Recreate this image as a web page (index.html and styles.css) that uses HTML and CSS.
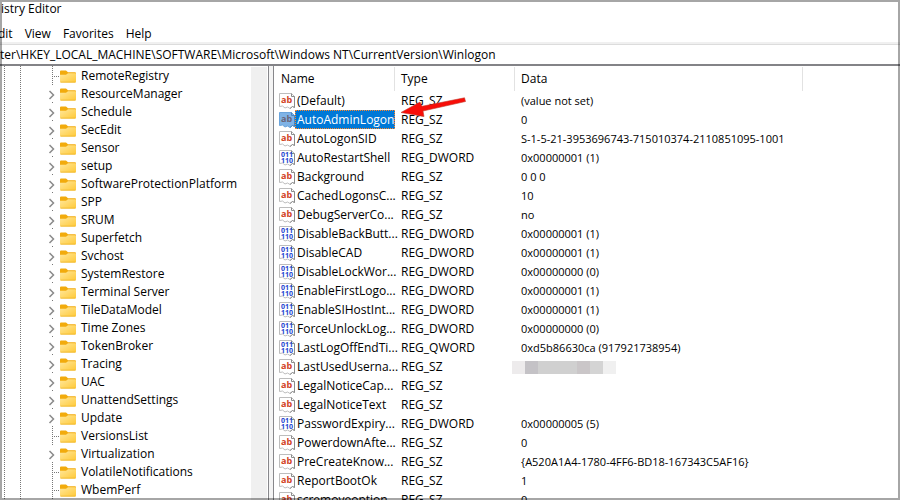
FILE: index.html
```
<!DOCTYPE html>
<html lang="en">
<head>
<meta charset="utf-8">
<title>Registry Editor</title>
<link rel="stylesheet" href="styles.css">
</head>
<body>
<svg class="defs" aria-hidden="true">
  <defs>
    <linearGradient id="fold" x1="0" y1="0" x2="1" y2="1">
      <stop offset="0" stop-color="#ffe79b"/>
      <stop offset="1" stop-color="#ffc937"/>
    </linearGradient>
    <symbol id="i-folder" viewBox="0 0 16 14" preserveAspectRatio="none">
      <path d="M0 1.5Q0 .5 1 .5H6L8 2.500H15Q16 2.500 16 3.500V6H0Z" fill="#f2ab0c"/>
      <path d="M0 5H6L8 3.500H15.500Q16 3.500 16 4V12.500Q16 13.500 15 13.500H1Q0 13.500 0 12.500Z" fill="url(#fold)"/>
      <path d="M.5 13.100H15.500" stroke="#eeb225" stroke-width=".8"/>
    </symbol>
    <symbol id="i-page" viewBox="0 0 16 16">
      <path class="page" d="M.5 .5H12.500L15.500 3.500V14.500L13.500 13.500L11 15.500L8.500 14L6 15L3.500 13L.5 13.500Z"/>
      <path class="fold" d="M12.500 .5V3.500H15.500V14.500L13.500 13.500L11 15.500"/>
    </symbol>
    <symbol id="i-sz" viewBox="0 0 16 16">
      <use href="#i-page"/>
      <text x="2" y="10" class="glyph-sz">ab</text>
    </symbol>
    <symbol id="i-bin" viewBox="0 0 16 16">
      <use href="#i-page"/>
      <text x="2" y="7" class="glyph-bin">011</text>
      <text x="2" y="13" class="glyph-bin">110</text>
    </symbol>
  </defs>
</svg>
<div class="window">
  <header class="title">istry Editor</header>
  <nav class="menu">
    <button>dit</button><button>View</button><button>Favorites</button><button>Help</button>
  </nav>
  <input class="address" aria-label="Address" value="ter\HKEY_LOCAL_MACHINE\SOFTWARE\Microsoft\Windows NT\CurrentVersion\Winlogon">
  <main class="panes">
    <div class="tree-pane">
      <ul class="tree" id="tree"></ul>
      <div class="scrollbar"></div>
    </div>
    <div class="splitter"></div>
    <div class="list-pane">
      <table class="values">
        <colgroup><col class="c-name"><col class="c-type"><col class="c-data"><col></colgroup>
        <thead><tr><th>Name</th><th>Type</th><th>Data</th><td></td></tr></thead>
        <tbody id="values"></tbody>
      </table>
      <svg class="arrow" viewBox="0 0 68 24" aria-hidden="true">
        <path d="M1 15.500L20 5L22 9.300L64.500 .8L65.500 4.500L23 14L24 19.500Z" fill="#f80d08" stroke="#c33a2c" stroke-width=".6"/>
      </svg>
    </div>
  </main>
</div>
<script src="app.js"></script>
</body>
</html>
```
FILE: styles.css
```
* { box-sizing: border-box; }
body {
  margin: 0;
  background: #fff;
  color: #000;
  font: 12px/18px "Open Sans", "Noto Sans", sans-serif;
}
.defs { position: absolute; width: 0; height: 0; }
.window {
  display: flex;
  flex-direction: column;
  height: 100vh;
  overflow: hidden;
}
.window::after {
  content: "";
  position: fixed;
  inset: 0;
  border: 2px solid rgba(0, 0, 0, 0.35);
  pointer-events: none;
}
.title { padding: 0 1px; }
.menu {
  display: flex;
  gap: 12px;
  align-items: center;
  height: 24px;
  padding-top: 7px;
  margin-left: -2px;
}
.menu button {
  margin: 0;
  padding: 0;
  border: 0;
  background: none;
  color: inherit;
  font: inherit;
}
.address {
  display: block;
  width: 100%;
  height: 24px;
  flex: none;
  padding: 2px 0 0;
  border: 0;
  border-bottom: 2px solid #838387;
  background: linear-gradient(#f0f0f0 2px, #dcdcdc 2px, #dcdcdc 3px, #fff 3px);
  color: inherit;
  font: inherit;
  outline: 0;
}
.panes { display: flex; flex: 1; min-height: 0; }
.tree-pane { display: flex; flex: none; width: 268px; overflow: hidden; }
.scrollbar { width: 16px; margin: 1px 1px 0 0; background: #f0f0f0; }
.tree {
  flex: 1;
  margin: 0;
  padding: 1px 0 0;
  list-style: none;
  background:
    repeating-linear-gradient(#777 0 1px, transparent 1px 2px) 4px 0 / 1px 100% no-repeat,
    repeating-linear-gradient(#777 0 1px, transparent 1px 2px) 20px 0 / 1px 100% no-repeat,
    repeating-linear-gradient(#777 0 1px, transparent 1px 2px) 52px 0 / 1px 100% no-repeat;
}
.tree li { display: flex; align-items: center; height: 18px; padding-left: 48px; white-space: nowrap; }
.tree .twig { width: 12px; height: 16px; }
.tree .chevron { background: #fff; }
.tree .leaf { background: repeating-linear-gradient(90deg, #777 0 1px, transparent 1px 2px) 4px 8px / 8px 1px no-repeat; }
.tree .folder { width: 16px; height: 13px; margin-right: 5px; }
.splitter {
  flex: none;
  width: 6px;
  border: solid #87878b;
  border-width: 0 1px;
  background: #f4f4f4;
}
.list-pane { position: relative; flex: 1; min-width: 0; overflow: hidden; }
.values { width: 100%; table-layout: fixed; border-collapse: separate; border-spacing: 0; }
.c-name { width: 121px; }
.c-type { width: 120px; }
.c-data { width: 288px; }
.values th, .values td { padding: 0 0 0 6px; text-align: left; font-weight: 400; white-space: nowrap; }
.values thead tr { height: 25px; }
.values thead th {
  padding-top: 1px;
  background: linear-gradient(#e2e2e2, #e2e2e2) right 1px / 1px 24px no-repeat;
}
.values thead th:first-child { padding-left: 7px; }
.values tbody td { height: 19px; }
.values tbody td:nth-child(3) { font-size: 11px; }
.values .name { padding-left: 5px; }
.name div { display: flex; align-items: center; height: 19px; }
.name svg { flex: none; width: 16px; height: 16px; }
.name span { flex: 1; height: 19px; padding-left: 2px; line-height: 20px; }
.selected span { background: #0078d7; color: #fff; outline: 1px dotted #ff8728; outline-offset: -1px; }
.page { fill: var(--page, #fff); stroke: var(--edge, #bdbdbd); }
.fold { fill: none; stroke: var(--crease, #8c8c8c); }
.glyph-sz { font: bold 9px "Open Sans", sans-serif; fill: var(--ink, #d2421f); }
.glyph-bin { font: bold 7px "Open Sans", sans-serif; fill: #2443d0; }
.selected {
  --page: #7fb3e6;
  --edge: #6aa4dc;
  --crease: #4586c4;
  --ink: #6a6478;
}
.redacted {
  width: 104px;
  height: 13px;
  margin: 2px 0 0 -9px;
  background: linear-gradient(90deg, #edebec 13px, #c4c2c6 13px 26px, #d0d0d0 26px 65px, #cac6c8 65px 78px, #d4d4d4 78px 91px, #f0f0f0 91px);
}
.arrow { position: absolute; left: 126px; top: 31px; width: 68px; height: 24px; }
```
FILE: app.js
```
const keys = [
  ["RemoteRegistry", 0], ["ResourceManager", 1], ["Schedule", 1], ["SecEdit", 1],
  ["Sensor", 1], ["setup", 1], ["SoftwareProtectionPlatform", 1], ["SPP", 1],
  ["SRUM", 1], ["Superfetch", 1], ["Svchost", 1], ["SystemRestore", 1],
  ["Terminal Server", 1], ["TileDataModel", 1], ["Time Zones", 1], ["TokenBroker", 1],
  ["Tracing", 1], ["UAC", 1], ["UnattendSettings", 1], ["Update", 1],
  ["VersionsList", 0], ["Virtualization", 1], ["VolatileNotifications", 0], ["WbemPerf", 0]
];
const values = [
  ["(Default)", "REG_SZ", "(value not set)"],
  ["AutoAdminLogon", "REG_SZ", "0"],
  ["AutoLogonSID", "REG_SZ", "S-1-5-21-3953696743-715010374-2110851095-1001"],
  ["AutoRestartShell", "REG_DWORD", "0x00000001 (1)"],
  ["Background", "REG_SZ", "0 0 0"],
  ["CachedLogonsC...", "REG_SZ", "10"],
  ["DebugServerCo...", "REG_SZ", "no"],
  ["DisableBackButt...", "REG_DWORD", "0x00000001 (1)"],
  ["DisableCAD", "REG_DWORD", "0x00000001 (1)"],
  ["DisableLockWor...", "REG_DWORD", "0x00000000 (0)"],
  ["EnableFirstLogo...", "REG_DWORD", "0x00000001 (1)"],
  ["EnableSIHostInt...", "REG_DWORD", "0x00000001 (1)"],
  ["ForceUnlockLog...", "REG_DWORD", "0x00000000 (0)"],
  ["LastLogOffEndTi...", "REG_QWORD", "0xd5b86630ca (917921738954)"],
  ["LastUsedUserna...", "REG_SZ", null],
  ["LegalNoticeCap...", "REG_SZ", ""],
  ["LegalNoticeText", "REG_SZ", ""],
  ["PasswordExpiry...", "REG_DWORD", "0x00000005 (5)"],
  ["PowerdownAfte...", "REG_SZ", "0"],
  ["PreCreateKnow...", "REG_SZ", "{A520A1A4-1780-4FF6-BD18-167343C5AF16}"],
  ["ReportBootOk", "REG_SZ", "1"],
  ["scremoveoption", "REG_SZ", "0"]
];
const chevron = '<svg class="twig chevron" viewBox="0 0 12 16"><path d="M1.500 5L5.500 9L1.500 13" fill="none" stroke="#8a8a8a" stroke-width="1.500"/></svg>';
document.getElementById("tree").innerHTML = keys.map(([name, open]) =>
  `<li>${open ? chevron : '<span class="twig leaf"></span>'}<svg class="folder"><use href="#i-folder"/></svg>${name}</li>`
).join("");
document.getElementById("values").innerHTML = values.map(([name, type, data], i) =>
  `<tr class="${i === 1 ? "selected" : ""}"><td class="name"><div><svg><use href="#${type === "REG_SZ" ? "i-sz" : "i-bin"}"/></svg><span>${name}</span></div></td><td>${type}</td><td>${data === null ? '<div class="redacted"></div>' : data}</td><td></td></tr>`
).join("");
```
